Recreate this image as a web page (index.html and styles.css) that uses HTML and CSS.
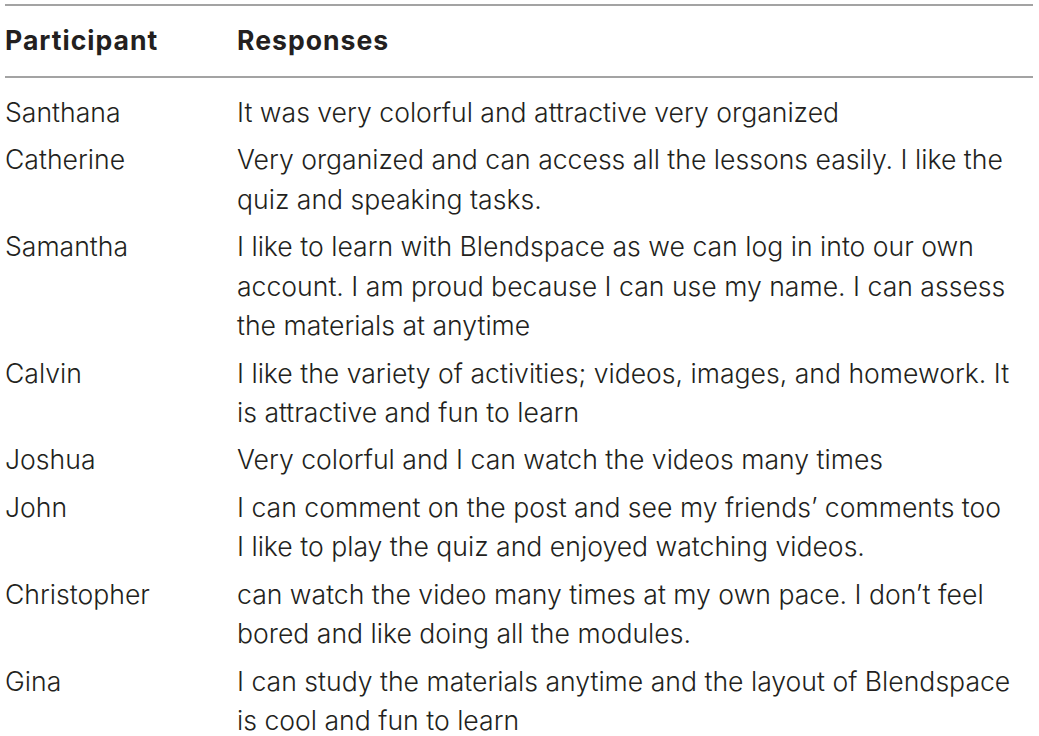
FILE: index.html
```html
<!DOCTYPE html>
<html>
<head>
<meta charset="utf-8">
<link rel="stylesheet" href="styles.css">
</head>
<body>
<table class="tbl">
<thead>
<tr><th class="c1">Participant</th><th class="c2">Responses</th></tr>
</thead>
<tbody>
<tr><td class="c1">Santhana</td><td class="c2">It was very colorful and attractive very organized</td></tr>
<tr><td class="c1">Catherine</td><td class="c2">Very organized and can access all the lessons easily. I like the<br>quiz and speaking tasks.</td></tr>
<tr><td class="c1">Samantha</td><td class="c2">I like to learn with Blendspace as we can log in into our own<br>account. I am proud because I can use my name. I can assess<br>the materials at anytime</td></tr>
<tr><td class="c1">Calvin</td><td class="c2">I like the variety of activities; videos, images, and homework. It<br>is attractive and fun to learn</td></tr>
<tr><td class="c1">Joshua</td><td class="c2">Very colorful and I can watch the videos many times</td></tr>
<tr><td class="c1">John</td><td class="c2">I can comment on the post and see my friends’ comments too<br>I like to play the quiz and enjoyed watching videos.</td></tr>
<tr><td class="c1">Christopher</td><td class="c2">can watch the video many times at my own pace. I don’t feel<br>bored and like doing all the modules.</td></tr>
<tr><td class="c1">Gina</td><td class="c2">I can study the materials anytime and the layout of Blendspace<br>is cool and fun to learn</td></tr>
</tbody>
</table>
</body>
</html>
```
FILE: styles.css
```css
html, body {
  margin: 0;
  padding: 0;
  background: #ffffff;
}
body {
  padding: 4px 6px 0 5px;
  font-family: Inter, "Liberation Sans", Arial, sans-serif;
  color: #231f20;
}
.tbl {
  width: 1028px;
  border-collapse: collapse;
  border-top: 2px solid #a3a3a3;
  font-size: 26.6px;
  font-weight: 300;
  line-height: 39.1px;
}
.tbl th {
  font-weight: 700;
  letter-spacing: 1px;
  text-align: left;
  padding: 15px 0 16px 0;
  border-bottom: 2px solid #a3a3a3;
  vertical-align: top;
}
.tbl td {
  text-align: left;
  vertical-align: top;
  padding: 4.4px 0;
  white-space: nowrap;
}
.tbl tbody tr:first-child td {
  padding-top: 14.5px;
}
.c1 {
  width: 232px;
}
```
